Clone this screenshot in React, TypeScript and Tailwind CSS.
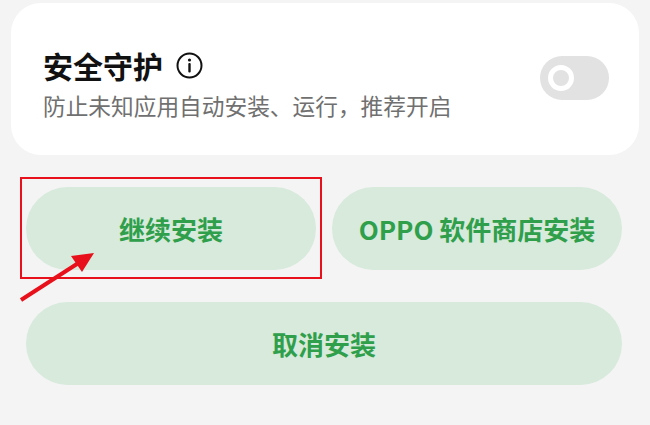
export default function App() {
  const cjk = { fontFamily: '"Noto Sans CJK SC", "Noto Sans", sans-serif' };

  return (
    <div className="relative w-[650px] h-[425px] overflow-hidden bg-[#f4f4f4] pt-[3px]" style={cjk}>
      {/* Security card */}
      <div className="mx-[11px] h-[152px] rounded-[30px] bg-white flex items-center justify-between pl-[32px] pr-[30px]">
        <div className="flex flex-col pt-[8px]">
          <div className="flex items-center gap-[13px]">
            <span className="text-[30px] leading-[38px] font-semibold text-[#111]">安全守护</span>
            <svg width="27" height="27" viewBox="0 0 27 27" className="mt-[2px]">
              <circle cx="13.5" cy="13.5" r="12" fill="none" stroke="#111" strokeWidth="2" />
              <circle cx="13.5" cy="8" r="1.6" fill="#111" />
              <rect x="12.3" y="11" width="2.4" height="9.5" rx="1" fill="#111" />
            </svg>
          </div>
          <span className="mt-[7px] text-[22.7px] leading-[30px] text-[#707070]">
            防止未知应用自动安装、运行，推荐开启
          </span>
        </div>

        {/* Toggle */}
        <div className="w-[69px] h-[44px] rounded-full bg-[#e2e2e2] flex items-center pl-[8px] mb-[2px]">
          <div className="w-[26px] h-[26px] rounded-full border-[5px] border-white bg-[#e2e2e2]" />
        </div>
      </div>

      {/* Buttons */}
      <div className="mt-[32px] px-[26px] flex flex-col gap-[32px]">
        <div className="flex gap-[16px]">
          <button className="w-[290px] h-[83px] rounded-full bg-[#d7eadc] text-[#2f9f4b] text-[26px] font-semibold">
            继续安装
          </button>
          <button className="w-[290px] h-[83px] rounded-full bg-[#d7eadc] text-[#2f9f4b] text-[26px] font-semibold">
            OPPO 软件商店安装
          </button>
        </div>
        <button className="w-[596px] h-[83px] rounded-full bg-[#d7eadc] text-[#2f9f4b] text-[26px] font-semibold">
          取消安装
        </button>
      </div>

      {/* Annotation: red box + arrow */}
      <div className="absolute left-[20px] top-[177px] w-[302px] h-[102px] border-2 border-[#e8101a] pointer-events-none" />
      <svg className="absolute left-0 top-0 pointer-events-none" width="650" height="425">
        <line x1="21" y1="300" x2="80" y2="262" stroke="#e8101a" strokeWidth="4" />
        <polygon points="94,253 71,256 82,272" fill="#e8101a" />
      </svg>
    </div>
  );
}
